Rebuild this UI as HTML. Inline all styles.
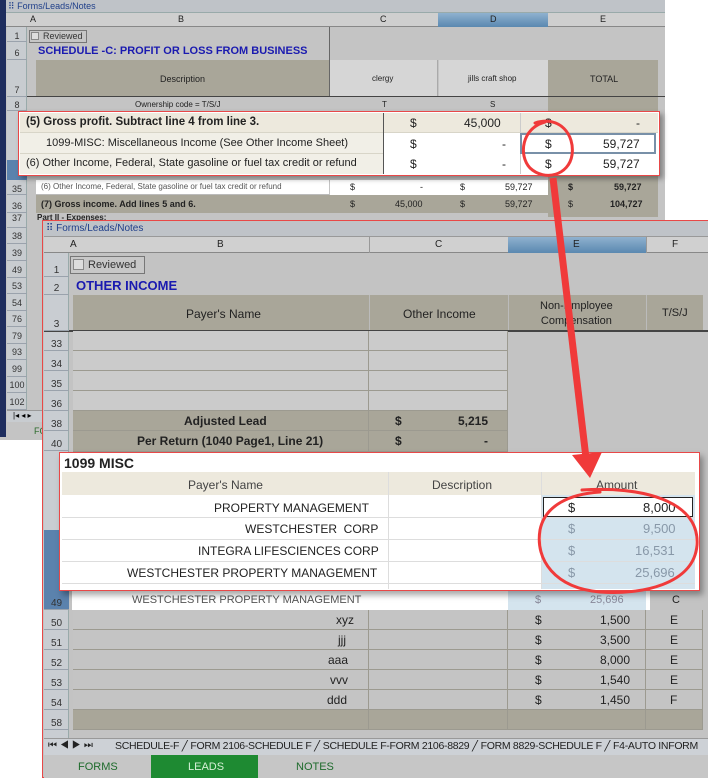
<!DOCTYPE html>
<html><head><meta charset="utf-8"><style>
*{margin:0;padding:0;box-sizing:border-box}
html,body{width:708px;height:778px;overflow:hidden}
body{position:relative;background:#fff;font-family:"Liberation Sans",sans-serif;}
#w{position:absolute;left:0;top:0;width:708px;height:778px;overflow:hidden}
.a{position:absolute}
.t{position:absolute;white-space:nowrap;color:#222}
.rn{position:absolute;font-size:9px;color:#333;text-align:center;border-bottom:1px solid #9aa2ac}
.c{position:absolute;border-right:1px solid #9c9a90;border-bottom:1px solid #9c9a90;font-size:11px;white-space:nowrap;overflow:hidden}
</style></head><body><div id="w">

<!-- BACK WINDOW -->
<div class="a" style="left:0;top:0;width:665px;height:440px;background:#c4c4c4"></div>
<div class="a" style="left:0;top:0;width:6px;height:437px;background:#1e2d5e"></div>
<div class="a" style="left:6px;top:0;width:659px;height:13px;background:#bfc3c8;border-bottom:1px solid #9aa"></div>
<div class="t" style="left:8px;top:1px;font-size:9px;color:#1f3f8a">⠿ Forms/Leads/Notes</div>
<div class="a" style="left:6px;top:13px;width:659px;height:14px;background:#cfcfcf;border-bottom:1px solid #888"></div>
<div class="a" style="left:438px;top:13px;width:110px;height:14px;background:linear-gradient(#8fb1cf,#5a88b0)"></div>
<div class="t" style="left:30px;top:14px;font-size:9px">A</div>
<div class="t" style="left:178px;top:14px;font-size:9px">B</div>
<div class="t" style="left:380px;top:14px;font-size:9px">C</div>
<div class="t" style="left:490px;top:14px;font-size:9px">D</div>
<div class="t" style="left:600px;top:14px;font-size:9px">E</div>
<div class="a" style="left:7px;top:27px;width:20px;height:410px;background:#c8ccd0;border-right:1px solid #9aa"></div>
<div class="a" style="left:329px;top:27px;width:1px;height:70px;background:#666"></div>
<div class="a" style="left:29px;top:30px;width:58px;height:13px;border:1px solid #777;background:#c6c6c6"></div>
<div class="a" style="left:31px;top:32px;width:8px;height:8px;border:1px solid #888;background:#ddd"></div>
<div class="t" style="left:43px;top:31px;font-size:9px;color:#333">Reviewed</div>
<div class="t" style="left:38px;top:45px;font-size:11px;font-weight:bold;color:#1a1ab0">SCHEDULE -C: PROFIT OR LOSS FROM BUSINESS</div>
<div class="a" style="left:36px;top:60px;width:293px;height:37px;background:#a9a699"></div>
<div class="a" style="left:330px;top:60px;width:108px;height:37px;background:#d6d6d6;border-right:1px solid #aaa"></div>
<div class="a" style="left:439px;top:60px;width:109px;height:37px;background:#d6d6d6"></div>
<div class="a" style="left:548px;top:60px;width:110px;height:37px;background:#a9a699"></div>
<div class="t" style="left:160px;top:74px;font-size:9px">Description</div>
<div class="t" style="left:372px;top:74px;font-size:8px">clergy</div>
<div class="t" style="left:468px;top:74px;font-size:8px">jills craft shop</div>
<div class="t" style="left:590px;top:74px;font-size:9px">TOTAL</div>
<div class="a" style="left:7px;top:96px;width:658px;height:1px;background:#444"></div>
<div class="a" style="left:548px;top:97px;width:110px;height:120px;background:#a9a699"></div>
<div class="t" style="left:135px;top:100px;font-size:8px">Ownership code = T/S/J</div>
<div class="t" style="left:382px;top:100px;font-size:8px">T</div>
<div class="t" style="left:490px;top:100px;font-size:8px">S</div>
<div class="rn" style="left:7px;top:27px;width:20px;height:15px;padding-top:4px">1</div>
<div class="rn" style="left:7px;top:42px;width:20px;height:18px;padding-top:6px">6</div>
<div class="rn" style="left:7px;top:60px;width:20px;height:37px;padding-top:25px">7</div>
<div class="rn" style="left:7px;top:97px;width:20px;height:14px;padding-top:3px">8</div>
<div class="a" style="left:7px;top:160px;width:20px;height:20px;background:#5b82ad"></div>
<div class="a" style="left:36px;top:180px;width:293px;height:15px;background:#fff;border-bottom:1px solid #bbb"></div>
<div class="a" style="left:330px;top:180px;width:218px;height:15px;background:#fff"></div>
<div class="t" style="left:41px;top:182px;font-size:8px;color:#555">(6) Other Income, Federal, State gasoline or fuel tax credit or refund</div>
<div class="t" style="left:350px;top:182px;font-size:9px">$</div><div class="t" style="left:420px;top:182px;font-size:9px">-</div>
<div class="t" style="left:460px;top:182px;font-size:9px">$</div><div class="t" style="left:505px;top:182px;font-size:9px">59,727</div>
<div class="t" style="left:568px;top:182px;font-size:9px;font-weight:bold">$</div><div class="t" style="left:614px;top:182px;font-size:9px;font-weight:bold">59,727</div>
<div class="rn" style="left:7px;top:180px;width:20px;height:15px;padding-top:4px">35</div>
<div class="a" style="left:36px;top:195px;width:622px;height:18px;background:#a9a699"></div>
<div class="t" style="left:41px;top:199px;font-size:9px;font-weight:bold">(7) Gross income. Add lines 5 and 6.</div>
<div class="t" style="left:350px;top:199px;font-size:9px">$</div><div class="t" style="left:395px;top:199px;font-size:9px">45,000</div>
<div class="t" style="left:460px;top:199px;font-size:9px">$</div><div class="t" style="left:505px;top:199px;font-size:9px">59,727</div>
<div class="t" style="left:568px;top:199px;font-size:9px">$</div><div class="t" style="left:610px;top:199px;font-size:9px;font-weight:bold">104,727</div>
<div class="rn" style="left:7px;top:195px;width:20px;height:18px;padding-top:6px">36</div>
<div class="t" style="left:37px;top:213px;font-size:8px;font-weight:bold">Part II - Expenses:</div>
<div class="rn" style="left:7px;top:213px;width:20px;height:15px">37</div>
<div class="rn" style="left:7px;top:228px;width:20px;height:16px;padding-top:3px">38</div>
<div class="rn" style="left:7px;top:244px;width:20px;height:17px;padding-top:4px">39</div>
<div class="rn" style="left:7px;top:261px;width:20px;height:17px;padding-top:4px">49</div>
<div class="rn" style="left:7px;top:278px;width:20px;height:16px;padding-top:3px">53</div>
<div class="rn" style="left:7px;top:294px;width:20px;height:17px;padding-top:4px">54</div>
<div class="rn" style="left:7px;top:311px;width:20px;height:16px;padding-top:3px">76</div>
<div class="rn" style="left:7px;top:327px;width:20px;height:17px;padding-top:4px">79</div>
<div class="rn" style="left:7px;top:344px;width:20px;height:16px;padding-top:3px">93</div>
<div class="rn" style="left:7px;top:360px;width:20px;height:17px;padding-top:4px">99</div>
<div class="rn" style="left:7px;top:377px;width:20px;height:16px;padding-top:3px">100</div>
<div class="rn" style="left:7px;top:393px;width:20px;height:17px;padding-top:4px">102</div>
<div class="a" style="left:7px;top:410px;width:36px;height:12px;background:#c8ccd0;border-top:1px solid #999;font-size:8px;padding-left:6px;overflow:hidden">|◂ ◂ ▸</div>
<div class="a" style="left:6px;top:422px;width:40px;height:15px;background:#c4c4c4"></div>
<div class="t" style="left:34px;top:426px;font-size:9px;color:#2a6a2a">FO</div>

<!-- POPUP 1 -->
<div class="a" style="left:18px;top:111px;width:642px;height:65px;border:1.5px solid #e84848;background:#fff;box-shadow:3px 3px 5px rgba(0,0,0,.35)"></div>
<div class="a" style="left:20px;top:113px;width:638px;height:20px;background:#ede9dd;border-bottom:1px solid #d8d5c8"></div>
<div class="a" style="left:20px;top:133px;width:363px;height:41px;background:#f1efe7"></div>
<div class="a" style="left:20px;top:153px;width:363px;height:1px;background:#d8d5c8"></div>
<div class="a" style="left:383px;top:113px;width:1px;height:61px;background:#555"></div>
<div class="a" style="left:520px;top:113px;width:1px;height:61px;background:#ccc"></div>
<div class="a" style="left:520px;top:133px;width:136px;height:21px;border:2px solid #7890a8"></div>
<div class="t" style="left:26px;top:116px;font-size:11.5px;font-weight:bold">(5) Gross profit. Subtract line 4 from line 3.</div>
<div class="t" style="left:46px;top:137px;font-size:11px">1099-MISC: Miscellaneous Income (See Other Income Sheet)</div>
<div class="t" style="left:26px;top:157px;font-size:11px">(6) Other Income, Federal, State gasoline or fuel tax credit or refund</div>
<div class="t" style="left:410px;top:116px;font-size:12px">$</div><div class="t" style="left:464px;top:116px;font-size:12px">45,000</div>
<div class="t" style="left:545px;top:116px;font-size:12px">$</div><div class="t" style="left:636px;top:116px;font-size:12px">-</div>
<div class="t" style="left:410px;top:137px;font-size:12px">$</div><div class="t" style="left:502px;top:137px;font-size:12px">-</div>
<div class="t" style="left:545px;top:137px;font-size:12px">$</div><div class="t" style="left:603px;top:137px;font-size:12px">59,727</div>
<div class="t" style="left:410px;top:157px;font-size:12px">$</div><div class="t" style="left:502px;top:157px;font-size:12px">-</div>
<div class="t" style="left:545px;top:157px;font-size:12px">$</div><div class="t" style="left:603px;top:157px;font-size:12px">59,727</div>

<!-- FRONT WINDOW -->
<div class="a" style="left:42px;top:220px;width:666px;height:558px;background:#c3c3c3;border:1.5px solid #e84848;border-right:none"></div>
<div class="a" style="left:44px;top:222px;width:664px;height:15px;background:#bfc3c8;border-bottom:1px solid #999"></div>
<div class="t" style="left:46px;top:223px;font-size:10px;color:#1f3f8a">⠿ Forms/Leads/Notes</div>
<div class="a" style="left:44px;top:237px;width:664px;height:16px;background:#d0d0d0;border-bottom:1px solid #888"></div>
<div class="a" style="left:508px;top:237px;width:138px;height:16px;background:linear-gradient(#8fb1cf,#5a88b0)"></div>
<div class="a" style="left:369px;top:237px;width:1px;height:16px;background:#999"></div>
<div class="a" style="left:646px;top:237px;width:1px;height:16px;background:#999"></div>
<div class="t" style="left:70px;top:239px;font-size:10px">A</div>
<div class="t" style="left:217px;top:239px;font-size:10px">B</div>
<div class="t" style="left:435px;top:239px;font-size:10px">C</div>
<div class="t" style="left:573px;top:239px;font-size:10px">E</div>
<div class="t" style="left:672px;top:239px;font-size:10px">F</div>
<div class="a" style="left:44px;top:253px;width:25px;height:485px;background:#c9cdd2;border-right:1px solid #9aa"></div>
<div class="a" style="left:70px;top:256px;width:75px;height:18px;border:1px solid #777;background:#c8c8c8"></div>
<div class="a" style="left:73px;top:259px;width:11px;height:11px;border:1px solid #888;background:#ddd"></div>
<div class="t" style="left:88px;top:259px;font-size:11px;color:#333">Reviewed</div>
<div class="t" style="left:76px;top:278px;font-size:13px;font-weight:bold;color:#1a1ab0">OTHER INCOME</div>
<div class="a" style="left:73px;top:295px;width:630px;height:36px;background:#a9a699"></div>
<div class="a" style="left:369px;top:295px;width:1px;height:36px;background:#bbb"></div>
<div class="a" style="left:508px;top:295px;width:1px;height:36px;background:#bbb"></div>
<div class="a" style="left:646px;top:295px;width:1px;height:36px;background:#bbb"></div>
<div class="t" style="left:186px;top:307px;font-size:12px">Payer's Name</div>
<div class="t" style="left:403px;top:307px;font-size:12px">Other Income</div>
<div class="t" style="left:540px;top:299px;font-size:11px;text-align:center;line-height:15px">Non-Employee<br>Compensation</div>
<div class="t" style="left:662px;top:307px;font-size:11px">T/S/J</div>
<div class="a" style="left:44px;top:330px;width:664px;height:1.5px;background:#444"></div>
<div class="c" style="left:73px;top:331px;width:296px;height:20px;background:#cbcbcb"></div><div class="c" style="left:369px;top:331px;width:139px;height:20px;background:#cbcbcb"></div>
<div class="c" style="left:73px;top:351px;width:296px;height:20px;background:#cbcbcb"></div><div class="c" style="left:369px;top:351px;width:139px;height:20px;background:#cbcbcb"></div>
<div class="c" style="left:73px;top:371px;width:296px;height:20px;background:#cbcbcb"></div><div class="c" style="left:369px;top:371px;width:139px;height:20px;background:#cbcbcb"></div>
<div class="c" style="left:73px;top:391px;width:296px;height:20px;background:#cbcbcb"></div><div class="c" style="left:369px;top:391px;width:139px;height:20px;background:#cbcbcb"></div>
<div class="c" style="left:73px;top:411px;width:296px;height:20px;background:#a9a699"></div><div class="c" style="left:369px;top:411px;width:139px;height:20px;background:#a9a699"></div>
<div class="c" style="left:73px;top:431px;width:296px;height:21px;background:#a9a699"></div><div class="c" style="left:369px;top:431px;width:139px;height:21px;background:#a9a699"></div>
<div class="t" style="left:184px;top:414px;font-size:12px;font-weight:bold">Adjusted Lead</div>
<div class="t" style="left:137px;top:434px;font-size:12px;font-weight:bold">Per Return (1040 Page1, Line 21)</div>
<div class="t" style="left:395px;top:414px;font-size:12px;font-weight:bold">$</div><div class="t" style="left:458px;top:414px;font-size:12px;font-weight:bold">5,215</div>
<div class="t" style="left:395px;top:434px;font-size:12px;font-weight:bold">$</div><div class="t" style="left:484px;top:434px;font-size:12px;font-weight:bold">-</div>
<div class="rn" style="left:44px;top:253px;width:25px;height:24px;padding-top:12px;font-size:10px">1</div>
<div class="rn" style="left:44px;top:277px;width:25px;height:18px;padding-top:6px;font-size:10px">2</div>
<div class="rn" style="left:44px;top:295px;width:25px;height:36px;padding-top:24px;font-size:10px">3</div>
<div class="rn" style="left:44px;top:331px;width:25px;height:20px;padding-top:8px;font-size:10px">33</div>
<div class="rn" style="left:44px;top:351px;width:25px;height:20px;padding-top:8px;font-size:10px">34</div>
<div class="rn" style="left:44px;top:371px;width:25px;height:20px;padding-top:8px;font-size:10px">35</div>
<div class="rn" style="left:44px;top:391px;width:25px;height:20px;padding-top:8px;font-size:10px">36</div>
<div class="rn" style="left:44px;top:411px;width:25px;height:20px;padding-top:8px;font-size:10px">38</div>
<div class="rn" style="left:44px;top:431px;width:25px;height:20px;padding-top:8px;font-size:10px">40</div>
<div class="a" style="left:44px;top:530px;width:25px;height:80px;background:#5b82ad"></div>
<div class="a" style="left:72px;top:590px;width:578px;height:20px;background:#fff"></div>
<div class="a" style="left:508px;top:590px;width:138px;height:20px;background:#d4e4ee"></div>
<div class="t" style="left:132px;top:594px;font-size:11px;color:#555">WESTCHESTER PROPERTY MANAGEMENT</div>
<div class="t" style="left:535px;top:594px;font-size:11px;color:#889">$</div><div class="t" style="left:590px;top:594px;font-size:11px;color:#889">25,696</div>
<div class="t" style="left:672px;top:594px;font-size:11px">C</div>
<div class="c" style="left:73px;top:610px;width:296px;height:20px;background:#c4c4c4"></div><div class="c" style="left:369px;top:610px;width:139px;height:20px;background:#c4c4c4"></div><div class="c" style="left:508px;top:610px;width:138px;height:20px;background:#c4c4c4"></div><div class="c" style="left:646px;top:610px;width:57px;height:20px;background:#c4c4c4"></div>
<div class="c" style="left:73px;top:630px;width:296px;height:20px;background:#c4c4c4"></div><div class="c" style="left:369px;top:630px;width:139px;height:20px;background:#c4c4c4"></div><div class="c" style="left:508px;top:630px;width:138px;height:20px;background:#c4c4c4"></div><div class="c" style="left:646px;top:630px;width:57px;height:20px;background:#c4c4c4"></div>
<div class="c" style="left:73px;top:650px;width:296px;height:20px;background:#c4c4c4"></div><div class="c" style="left:369px;top:650px;width:139px;height:20px;background:#c4c4c4"></div><div class="c" style="left:508px;top:650px;width:138px;height:20px;background:#c4c4c4"></div><div class="c" style="left:646px;top:650px;width:57px;height:20px;background:#c4c4c4"></div>
<div class="c" style="left:73px;top:670px;width:296px;height:20px;background:#c4c4c4"></div><div class="c" style="left:369px;top:670px;width:139px;height:20px;background:#c4c4c4"></div><div class="c" style="left:508px;top:670px;width:138px;height:20px;background:#c4c4c4"></div><div class="c" style="left:646px;top:670px;width:57px;height:20px;background:#c4c4c4"></div>
<div class="c" style="left:73px;top:690px;width:296px;height:20px;background:#c4c4c4"></div><div class="c" style="left:369px;top:690px;width:139px;height:20px;background:#c4c4c4"></div><div class="c" style="left:508px;top:690px;width:138px;height:20px;background:#c4c4c4"></div><div class="c" style="left:646px;top:690px;width:57px;height:20px;background:#c4c4c4"></div>
<div class="c" style="left:73px;top:710px;width:296px;height:20px;background:#a9a699"></div><div class="c" style="left:369px;top:710px;width:139px;height:20px;background:#a9a699"></div><div class="c" style="left:508px;top:710px;width:138px;height:20px;background:#a9a699"></div><div class="c" style="left:646px;top:710px;width:57px;height:20px;background:#a9a699"></div>
<div class="t" style="left:336px;top:613px;font-size:12px">xyz</div>
<div class="t" style="left:338px;top:633px;font-size:12px">jjj</div>
<div class="t" style="left:328px;top:653px;font-size:12px">aaa</div>
<div class="t" style="left:330px;top:673px;font-size:12px">vvv</div>
<div class="t" style="left:327px;top:693px;font-size:12px">ddd</div>
<div class="t" style="left:535px;top:613px;font-size:12px">$</div><div class="t" style="left:600px;top:613px;font-size:12px">1,500</div><div class="t" style="left:670px;top:613px;font-size:12px">E</div>
<div class="t" style="left:535px;top:633px;font-size:12px">$</div><div class="t" style="left:600px;top:633px;font-size:12px">3,500</div><div class="t" style="left:670px;top:633px;font-size:12px">E</div>
<div class="t" style="left:535px;top:653px;font-size:12px">$</div><div class="t" style="left:600px;top:653px;font-size:12px">8,000</div><div class="t" style="left:670px;top:653px;font-size:12px">E</div>
<div class="t" style="left:535px;top:673px;font-size:12px">$</div><div class="t" style="left:600px;top:673px;font-size:12px">1,540</div><div class="t" style="left:670px;top:673px;font-size:12px">E</div>
<div class="t" style="left:535px;top:693px;font-size:12px">$</div><div class="t" style="left:600px;top:693px;font-size:12px">1,450</div><div class="t" style="left:670px;top:693px;font-size:12px">F</div>
<div class="rn" style="left:44px;top:590px;width:25px;height:20px;padding-top:8px;font-size:10px">49</div>
<div class="rn" style="left:44px;top:610px;width:25px;height:20px;padding-top:8px;font-size:10px">50</div>
<div class="rn" style="left:44px;top:630px;width:25px;height:20px;padding-top:8px;font-size:10px">51</div>
<div class="rn" style="left:44px;top:650px;width:25px;height:20px;padding-top:8px;font-size:10px">52</div>
<div class="rn" style="left:44px;top:670px;width:25px;height:20px;padding-top:8px;font-size:10px">53</div>
<div class="rn" style="left:44px;top:690px;width:25px;height:20px;padding-top:8px;font-size:10px">54</div>
<div class="rn" style="left:44px;top:710px;width:25px;height:20px;padding-top:8px;font-size:10px">58</div>
<div class="a" style="left:44px;top:738px;width:664px;height:17px;background:#cdd1d6;border-top:1px solid #999"></div>
<div class="t" style="left:48px;top:740px;font-size:10px;letter-spacing:3px">⏮◀▶⏭</div>
<div class="t" style="left:115px;top:740px;width:593px;overflow:hidden;font-size:10.5px;letter-spacing:-0.3px;color:#222">SCHEDULE-F ╱ FORM 2106-SCHEDULE F ╱ SCHEDULE F-FORM 2106-8829 ╱ FORM 8829-SCHEDULE F ╱ F4-AUTO INFORM</div>
<div class="a" style="left:44px;top:755px;width:664px;height:23px;background:#c6c6c6"></div>
<div class="a" style="left:151px;top:755px;width:107px;height:23px;background:#1e8a32"></div>
<div class="t" style="left:78px;top:761px;font-size:11px;color:#1e6b2c">FORMS</div>
<div class="t" style="left:188px;top:761px;font-size:11px;color:#d6f0d6">LEADS</div>
<div class="t" style="left:296px;top:761px;font-size:11px;color:#1e6b2c">NOTES</div>

<!-- POPUP 2 -->
<div class="a" style="left:59px;top:452px;width:641px;height:139px;border:1.5px solid #e84848;background:#fff;box-shadow:3px 4px 6px rgba(0,0,0,.35)"></div>
<div class="t" style="left:64px;top:455px;font-size:14px;font-weight:bold;color:#222">1099 MISC</div>
<div class="a" style="left:62px;top:472px;width:633px;height:23px;background:#ede9dd"></div>
<div class="a" style="left:541px;top:495px;width:154px;height:94px;background:#d4e4ee"></div>
<div class="a" style="left:62px;top:517px;width:633px;height:1px;background:#ddd"></div>
<div class="a" style="left:62px;top:539px;width:633px;height:1px;background:#ddd"></div>
<div class="a" style="left:62px;top:561px;width:633px;height:1px;background:#ddd"></div>
<div class="a" style="left:62px;top:583px;width:633px;height:1px;background:#ddd"></div>
<div class="a" style="left:388px;top:472px;width:1px;height:117px;background:#ddd"></div>
<div class="a" style="left:541px;top:472px;width:1px;height:117px;background:#ddd"></div>
<div class="a" style="left:543px;top:497px;width:150px;height:20px;border:1.5px solid #222;background:#fff"></div>
<div class="t" style="left:188px;top:478px;font-size:12px;color:#444">Payer's Name</div>
<div class="t" style="left:432px;top:478px;font-size:12px;color:#444">Description</div>
<div class="t" style="left:596px;top:478px;font-size:12px;color:#444">Amount</div>
<div class="t" style="left:214px;top:501px;font-size:12px">PROPERTY MANAGEMENT</div>
<div class="t" style="left:245px;top:522px;font-size:12px">WESTCHESTER &nbsp;CORP</div>
<div class="t" style="left:198px;top:544px;font-size:12px">INTEGRA LIFESCIENCES CORP</div>
<div class="t" style="left:127px;top:566px;font-size:12px">WESTCHESTER PROPERTY MANAGEMENT</div>
<div class="t" style="left:568px;top:500px;font-size:13px">$</div><div class="t" style="left:643px;top:500px;font-size:13px">8,000</div>
<div class="t" style="left:568px;top:521px;font-size:13px;color:#8898a8">$</div><div class="t" style="left:643px;top:521px;font-size:13px;color:#8898a8">9,500</div>
<div class="t" style="left:568px;top:543px;font-size:13px;color:#8898a8">$</div><div class="t" style="left:635px;top:543px;font-size:13px;color:#8898a8">16,531</div>
<div class="t" style="left:568px;top:565px;font-size:13px;color:#8898a8">$</div><div class="t" style="left:635px;top:565px;font-size:13px;color:#8898a8">25,696</div>

<svg class="a" style="left:0;top:0" width="708" height="778" viewBox="0 0 708 778">
<g fill="none" stroke="#f03a3a" stroke-width="3" stroke-linecap="round">
<path d="M535 123 C560 115 575 135 572 155 C569 175 545 182 530 168 C518 155 522 128 545 122"/>
<path d="M582 490 C640 486 700 500 697 545 C694 585 640 595 600 592 C555 588 535 560 540 530 C545 505 570 494 600 492"/>
</g>
<path d="M553 178 L586 458" stroke="#f03a3a" stroke-width="7"/>
<path d="M572 455 L602 452 L590 478 Z" fill="#f03a3a"/>
</svg>
</div></body></html>
